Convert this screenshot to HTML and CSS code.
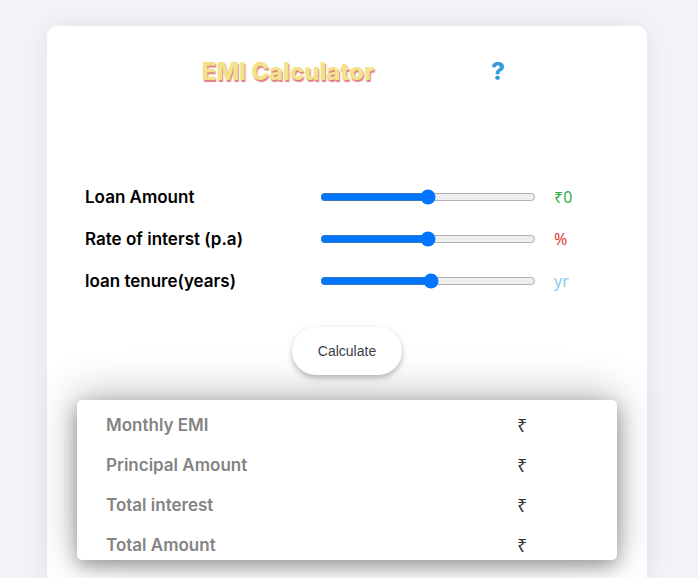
FILE: index.html
```html
<!DOCTYPE html>
<html lang="en">
<head>
<meta charset="utf-8">
<meta name="viewport" content="width=device-width, initial-scale=1">
<title>EMI Calculator</title>
<link rel="stylesheet" href="styles.css">
</head>
<body>
<main class="card">
  <header class="head">
    <h1 class="title">EMI Calculator</h1>
    <a class="help" href="#help">?</a>
  </header>
  <form class="form">
    <div class="field">
      <label for="amount">Loan Amount</label>
      <input id="amount" type="range" min="0" max="100" value="50">
      <output class="amount" for="amount">₹0</output>
    </div>
    <div class="field">
      <label for="rate">Rate of interst (p.a)</label>
      <input id="rate" type="range" min="0" max="100" value="50">
      <output class="rate" for="rate">%</output>
    </div>
    <div class="field">
      <label for="tenure">loan tenure(years)</label>
      <input id="tenure" type="range" min="1" max="30" value="16">
      <output class="tenure" for="tenure">yr</output>
    </div>
    <button class="calculate" type="button">Calculate</button>
  </form>
  <dl class="results">
    <div class="result"><dt>Monthly EMI</dt><dd>₹</dd></div>
    <div class="result"><dt>Principal Amount</dt><dd>₹</dd></div>
    <div class="result"><dt>Total interest</dt><dd>₹</dd></div>
    <div class="result"><dt>Total Amount</dt><dd>₹</dd></div>
  </dl>
</main>
</body>
</html>
```
FILE: styles.css
```css
* {
  box-sizing: border-box;
}

html {
  scrollbar-width: none;
}

body {
  margin: 0;
  padding: 26px 51px 26px 47px;
  background: #f3f3f9;
  font-family: Inter, "Noto Sans", sans-serif;
  font-size: 17px;
  line-height: 24px;
}

.card {
  max-width: 600px;
  margin: 0 auto;
  padding: 30px;
  border-radius: 10px;
  background: #fff;
  box-shadow: 0 0 30px rgba(0, 0, 0, 0.08);
}

.head {
  display: grid;
  grid-template-columns: 1fr 130px;
  align-items: center;
  height: 32px;
}

.title {
  margin: 0;
  padding-left: 12px;
  color: #f3e28c;
  font-size: 24px;
  font-weight: 800;
  line-height: 32px;
  text-align: center;
  text-shadow: 1px 2px 1px #e08080;
}

.help {
  padding-left: 4px;
  color: #3498db;
  font-size: 24px;
  font-weight: 800;
  text-decoration: none;
}

.form {
  display: flex;
  flex-direction: column;
  gap: 18px;
  padding: 97px 8px 25px;
}

.field {
  display: grid;
  grid-template-columns: 233px 1fr 71px;
  align-items: center;
}

.field label {
  font-weight: 600;
}

.field input {
  width: auto;
  height: 16px;
  margin: 0 2px;
}

.field output {
  padding-left: 16px;
  font-family: "Noto Sans", sans-serif;
  font-size: 16px;
}

.amount {
  color: #3cae49;
}

.rate {
  color: #e03c3c;
}

.tenure {
  color: #87ceeb;
}

.calculate {
  align-self: center;
  height: 48px;
  margin-top: 16px;
  padding: 0 26px;
  border: 0;
  border-radius: 24px;
  background: #fff;
  color: #3c4043;
  font-family: "Liberation Sans", Arial, sans-serif;
  font-size: 14px;
  box-shadow: 0 3px 5px rgba(0, 0, 0, 0.2), 0 2px 10px rgba(0, 0, 0, 0.08);
}

.results {
  margin: 0;
  border-radius: 5px;
  background: #fff;
  box-shadow: 0 -4px 44px rgba(0, 0, 0, 0.28), 0 6px 18px rgba(0, 0, 0, 0.32);
}

.result {
  display: grid;
  grid-template-columns: 1fr 100px;
  align-items: center;
  height: 40px;
  padding-top: 10px;
  padding-left: 29px;
}

.result dt {
  color: #848484;
  font-weight: 600;
}

.result dd {
  margin: 0;
  color: #333;
  font-family: "Noto Sans", sans-serif;
  font-size: 18px;
}
```
